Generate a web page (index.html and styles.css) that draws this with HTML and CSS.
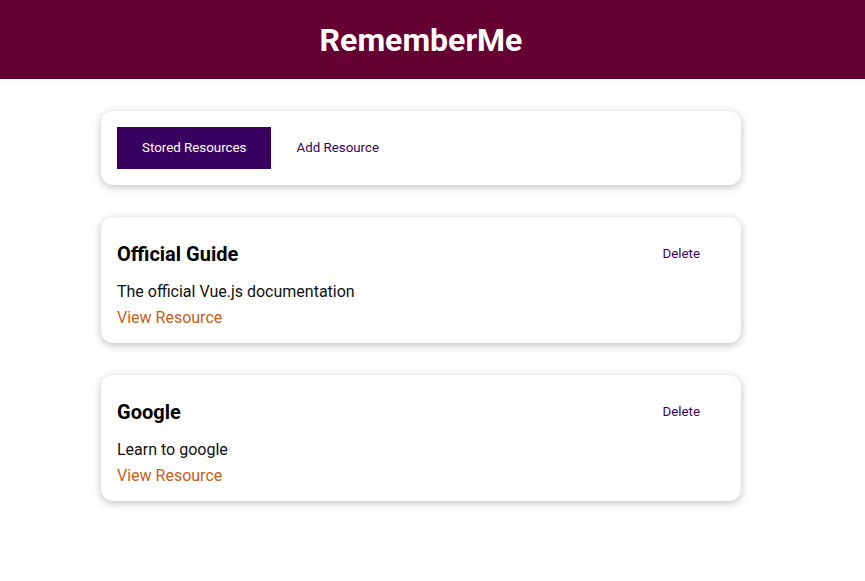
FILE: index.html
```html
<!DOCTYPE html>
<html lang="en">
<head>
<meta charset="utf-8">
<title>RememberMe</title>
<link rel="stylesheet" href="styles.css">
</head>
<body>
<header class="app-header"><h1>RememberMe</h1></header>
<main class="page">
  <div class="card tabs">
    <button class="btn">Stored Resources</button>
    <button class="btn btn-flat">Add Resource</button>
  </div>
  <ul class="resources">
    <li class="card">
      <div class="res-head">
        <h3>Official Guide</h3>
        <button class="btn btn-flat">Delete</button>
      </div>
      <p>The official Vue.js documentation</p>
      <nav><a href="#">View Resource</a></nav>
    </li>
    <li class="card">
      <div class="res-head">
        <h3>Google</h3>
        <button class="btn btn-flat">Delete</button>
      </div>
      <p>Learn to google</p>
      <nav><a href="#">View Resource</a></nav>
    </li>
  </ul>
</main>
</body>
</html>
```
FILE: styles.css
```css
* { box-sizing: border-box; }
html { font-family: Roboto, "Noto Sans", sans-serif; }
body { margin: 0; background: #fff; color: #111; }
.app-header {
  height: 79px;
  padding-right: 23px;
  background: #640032;
  display: flex;
  justify-content: center;
  align-items: center;
}
.app-header h1 { margin: 0; color: #fff; font-size: 32px; font-weight: 700; }
.page { padding-right: 23px; display: flow-root; }
.card {
  border-radius: 12px;
  box-shadow: 0 2px 8px rgba(0,0,0,0.26);
  padding: 16px;
  margin: 32px auto;
  max-width: 640px;
  background: #fff;
}
.tabs { display: flex; }
.btn {
  padding: 12px 24px;
  font-family: inherit;
  font-size: 13.333px;
  line-height: 16px;
  border: 1px solid #3a0061;
  background: #3a0061;
  color: #fff;
  cursor: pointer;
}
.btn-flat { background: transparent; border-color: transparent; color: #3a0061; }
.resources { list-style: none; margin: 0 auto; padding: 0; max-width: 640px; }
.res-head { display: flex; justify-content: space-between; align-items: center; }
.res-head h3 { margin: 8px 0; font-size: 20px; font-weight: 700; color: #000; }
.card p { margin: 8px 0; font-size: 16px; line-height: 18px; }
.card nav { line-height: 18px; }
.card a { text-decoration: none; color: #c4601c; font-size: 16px; }
```
